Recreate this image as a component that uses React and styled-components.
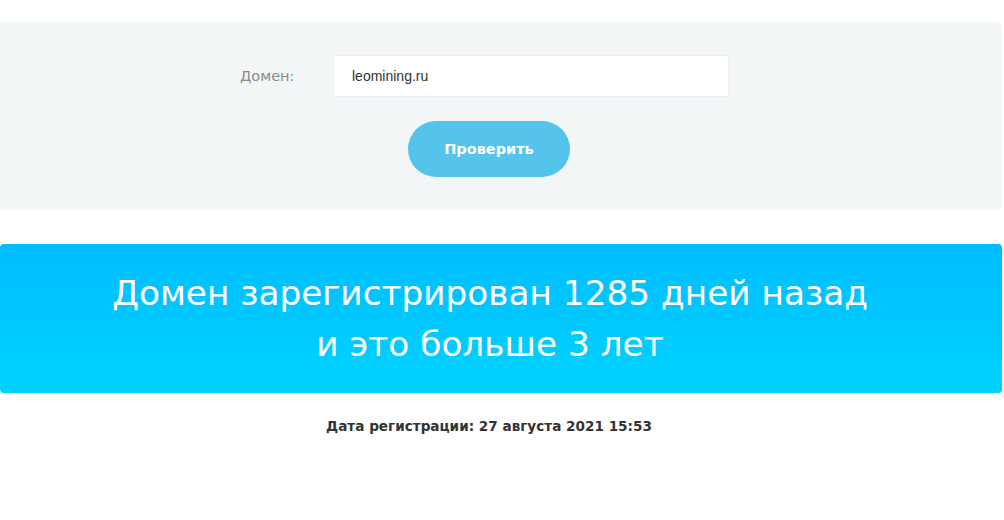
import React from 'react'
import styled, { createGlobalStyle } from 'styled-components'

const GlobalStyle = createGlobalStyle`
  body {
    margin: 0;
    background: #fff;
    font-family: 'DejaVu Sans', 'Noto Sans', sans-serif;
  }
`

const Page = styled.div`
  padding-top: 22px;
  padding-right: 2px;
`

const FormPanel = styled.section`
  background: #f3f6f7;
  border-radius: 0 4px 4px 0;
  padding: 33px 0;
`

const Form = styled.form`
  width: 498px;
  margin-left: 240px;
  display: flex;
  flex-direction: column;
  align-items: center;
  gap: 24px;
`

const Row = styled.div`
  align-self: stretch;
  display: flex;
  align-items: center;
`

const Label = styled.label`
  width: 93px;
  font-size: 14.5px;
  color: #8a8a8a;
`

const Input = styled.input`
  width: 396px;
  height: 42px;
  box-sizing: border-box;
  border: 1px solid #eceff1;
  border-radius: 2px;
  background: #fff;
  padding: 0 18px;
  font-family: 'Liberation Sans', Arial, sans-serif;
  font-size: 14px;
  color: #333;
  outline: none;
`

const Button = styled.button`
  width: 162px;
  height: 56px;
  border: none;
  border-radius: 28px;
  background: #54c4ec;
  color: #fff;
  font-family: inherit;
  font-size: 14.5px;
  font-weight: 700;
  cursor: pointer;
`

const Result = styled.div`
  margin-top: 34px;
  height: 149px;
  border-radius: 4px;
  background: linear-gradient(180deg, #00bdff 0%, #00d3ff 100%);
  display: flex;
  align-items: center;
  justify-content: center;
  padding-right: 22px;
  box-sizing: border-box;
`

const ResultText = styled.h2`
  margin: 0;
  text-align: center;
  font-size: 34.3px;
  font-weight: 400;
  line-height: 51px;
  color: #fff;
`

const DateLine = styled.p`
  margin: 25px 0 0;
  padding-right: 24px;
  text-align: center;
  font-size: 13.6px;
  font-weight: 700;
  color: #333;
`

export default function App() {
  return (
    <Page>
      <GlobalStyle />
      <FormPanel>
        <Form onSubmit={(e) => e.preventDefault()}>
          <Row>
            <Label htmlFor="domain">Домен:</Label>
            <Input id="domain" defaultValue="leomining.ru" />
          </Row>
          <Button type="submit">Проверить</Button>
        </Form>
      </FormPanel>
      <Result>
        <ResultText>
          Домен зарегистрирован 1285 дней назад
          <br />
          и это больше 3 лет
        </ResultText>
      </Result>
      <DateLine>Дата регистрации: 27 августа 2021 15:53</DateLine>
    </Page>
  )
}
